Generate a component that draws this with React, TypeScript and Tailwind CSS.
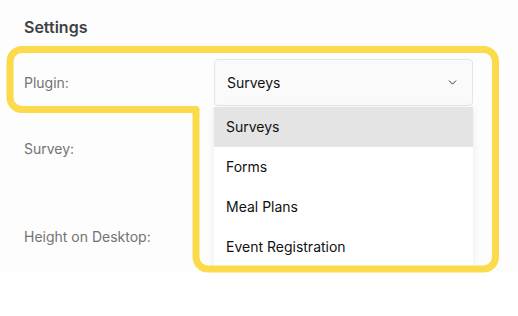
import { ChevronDown } from "lucide-react";

const options = ["Surveys", "Forms", "Meal Plans", "Event Registration"];

export default function App() {
  return (
    <div className="relative w-[518px] h-[316px] bg-white font-['Inter',sans-serif]">
      <div className="h-[272px] bg-[#fdfdfd] overflow-hidden px-6 pt-[17px]">
        <h2 className="h-5 leading-5 text-base font-semibold text-[#3f3f46]">Settings</h2>

        <div className="mt-[22px] flex items-center">
          <label className="w-[190px] text-sm text-[#737373]">Plugin:</label>
          <div className="relative w-[259px]">
            <div className="flex h-[47px] items-center justify-between rounded-[4px] border border-[#e5e5e5] bg-[#fafafa] pl-3 pr-3 text-sm text-[#111111]">
              <span>Surveys</span>
              <ChevronDown size={13} strokeWidth={1.7} className="mr-px text-[#262626]" />
            </div>
            <ul className="absolute left-0 top-[48px] z-10 w-full bg-white shadow-[0_2px_8px_rgba(0,0,0,0.08)]">
              {options.map((o, i) => (
                <li
                  key={o}
                  className={
                    i === 0
                      ? "flex h-10 items-center bg-[#e4e4e4] px-3 text-sm text-[#111111]"
                      : "flex h-10 items-center px-3 text-sm text-[#111111]"
                  }
                >
                  {o}
                </li>
              ))}
            </ul>
          </div>
        </div>

        <div className="mt-[23px] flex h-10 items-center">
          <label className="w-[190px] text-sm text-[#737373]">Survey:</label>
        </div>

        <div className="mt-[48px] flex h-10 items-center">
          <label className="w-[190px] text-sm text-[#737373]">Height on Desktop:</label>
        </div>
      </div>

      <svg className="pointer-events-none absolute inset-0 z-20" width="518" height="316" viewBox="0 0 518 316">
        <path
          d="M22 49.5 H483.5 A12 12 0 0 1 495.5 61.5 V257 A12 12 0 0 1 483.5 269 H208 A12 12 0 0 1 196 257 V109.5 H22 A12 12 0 0 1 10 97.5 V61.5 A12 12 0 0 1 22 49.5 Z"
          fill="none"
          stroke="#fbda4b"
          strokeWidth="7"
          strokeLinejoin="round"
        />
      </svg>
    </div>
  );
}
